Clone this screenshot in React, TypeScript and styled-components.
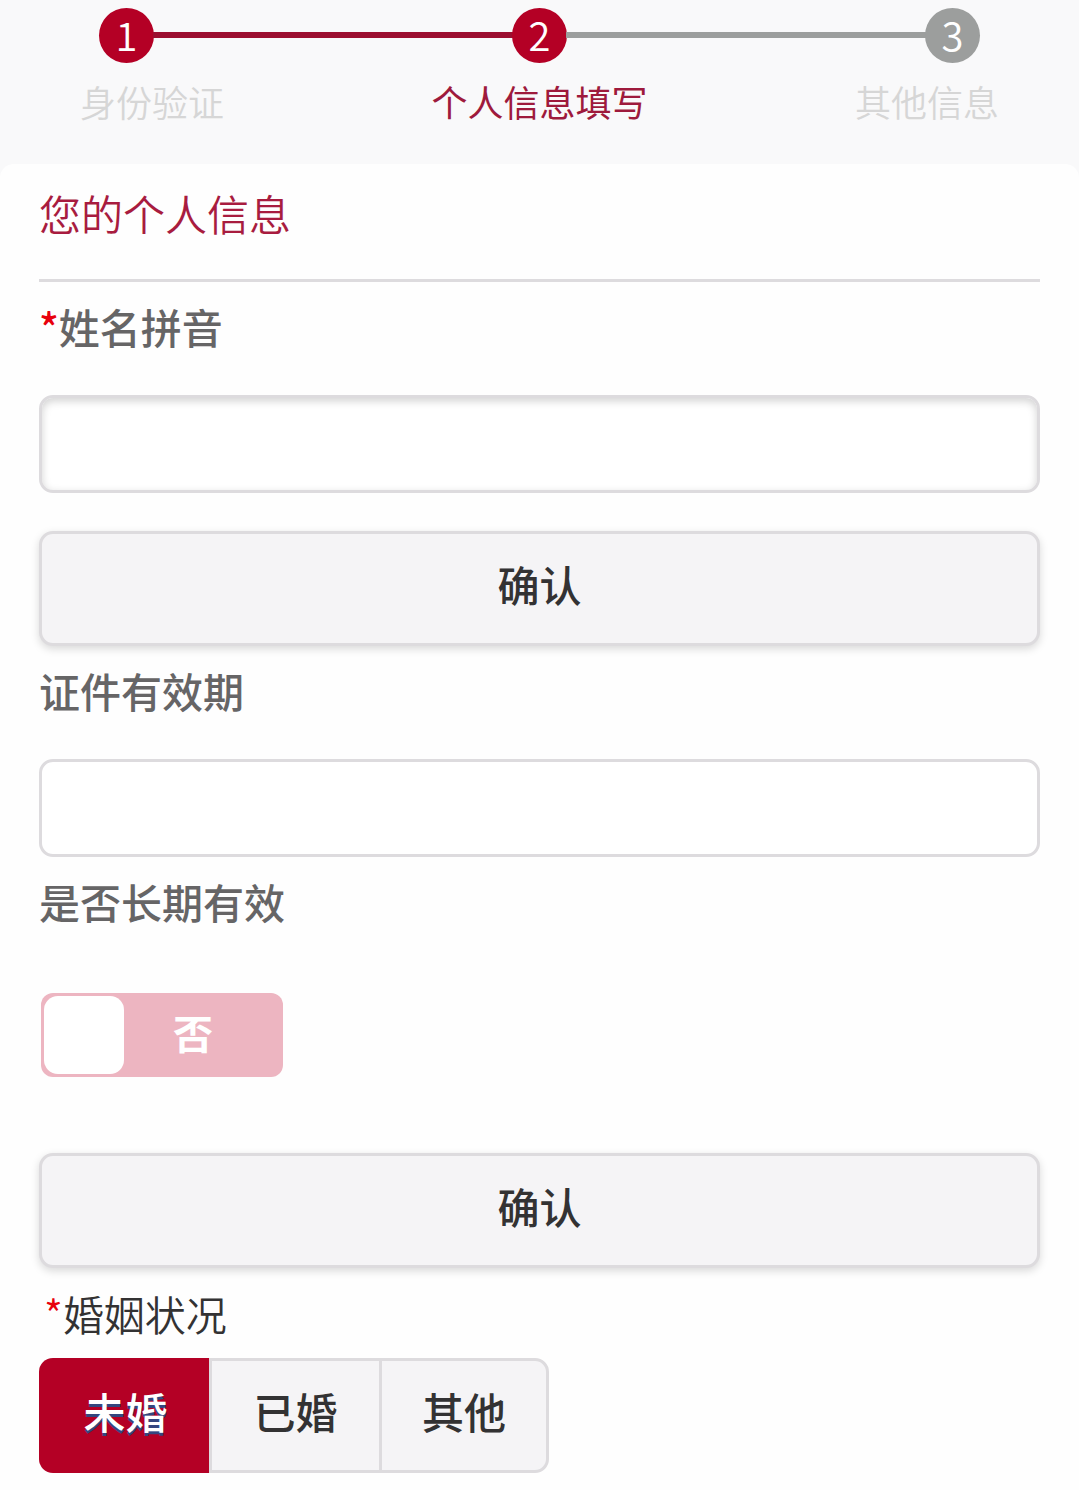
import { useState } from 'react'
import styled, { createGlobalStyle } from 'styled-components'

const colors = {
  brand: '#b40025',
  brandDark: '#9c0f30',
  grey: '#9c9e9d',
  line: '#dddbde',
  surface: '#f5f4f6',
  text: '#333233',
  label: '#666566',
}

const GlobalStyle = createGlobalStyle`
  *, *::before, *::after {
    box-sizing: border-box;
  }

  body {
    margin: 0;
    background-color: #f9f9fa;
    color: ${colors.text};
    font-family: 'Noto Sans CJK SC', sans-serif;
    font-size: 42px;
  }

  input, button {
    font: inherit;
  }
`

const Header = styled.header`
  padding: 8px 0 33px;
`

const StepTrack = styled.div`
  display: flex;
  align-items: center;
  padding: 0 99px;
`

const StepCircle = styled.span<{ $active?: boolean }>`
  flex: none;
  width: 55px;
  height: 55px;
  border-radius: 50%;
  background-color: ${({ $active }) => ($active ? colors.brand : colors.grey)};
  color: #fff;
  font-size: 40px;
  font-weight: 350;
  line-height: 52px;
  text-align: center;
`

const StepLine = styled.span<{ $active?: boolean }>`
  flex: 1;
  height: 6px;
  margin: 0 -1px 2px;
  background-color: ${({ $active }) => ($active ? colors.brandDark : colors.grey)};
`

const StepLabels = styled.div`
  display: flex;
  justify-content: space-between;
  margin-top: 8px;
  padding: 0 80px;
  font-size: 36px;
  line-height: 60px;
`

const StepLabel = styled.span<{ $current?: boolean }>`
  color: ${({ $current }) => ($current ? '#9e1a3c' : '#d6d6d6')};
  font-weight: ${({ $current }) => ($current ? 400 : 350)};
`

const Main = styled.main`
  padding: 19px 39px 17px;
  border-radius: 14px 14px 0 0;
  background-color: #fefefe;
`

const Title = styled.h1`
  margin: 0;
  padding-bottom: 36px;
  border-bottom: 3px solid ${colors.line};
  color: #a81c3f;
  font-size: 42px;
  font-weight: 350;
  line-height: 60px;
`

const FieldLabel = styled.label`
  display: block;
  margin: 14px 0 39px;
  color: ${colors.label};
  font-size: 41px;
  font-weight: 500;
  line-height: 60px;
`

const Required = styled.span`
  color: #e8000c;
`

const TextInput = styled.input<{ $inset?: boolean }>`
  display: block;
  width: 100%;
  height: 98px;
  padding: 0 24px;
  border: 3px solid ${colors.line};
  border-radius: 14px;
  background-color: #fff;
  box-shadow: ${({ $inset }) => ($inset ? 'inset 0 3px 8px rgba(0, 0, 0, 0.18)' : 'none')};
  color: ${colors.text};
  outline: none;
`

const ConfirmButton = styled.button<{ $gap: number }>`
  display: block;
  width: 100%;
  height: 115px;
  margin-top: ${({ $gap }) => $gap}px;
  padding: 0 0 10px;
  border: 3px solid ${colors.line};
  border-radius: 14px;
  background-color: ${colors.surface};
  box-shadow: 0 3px 8px rgba(0, 0, 0, 0.15);
  color: ${colors.text};
  font-weight: 500;
  line-height: 60px;
`

const HiddenInput = styled.input`
  position: absolute;
  width: 1px;
  height: 1px;
  margin: 0;
  opacity: 0;
`

const Switch = styled.label<{ $on: boolean }>`
  position: relative;
  display: flex;
  flex-direction: ${({ $on }) => ($on ? 'row-reverse' : 'row')};
  width: 242px;
  height: 84px;
  margin: 62px 2px 0;
  padding: 3px;
  border-radius: 12px;
  background-color: #edb5c1;
  color: #fff;
  font-size: 40px;
  font-weight: 700;
  line-height: 72px;
  cursor: pointer;
`

const Knob = styled.span`
  width: 80px;
  height: 78px;
  border-radius: 14px;
  background-color: #fff;
`

const SwitchText = styled.span`
  flex: 1;
  padding-right: 18px;
  text-align: center;
`

const Fieldset = styled.fieldset`
  min-width: 0;
  margin: 15px 0 0;
  padding: 0;
  border: 0;
`

const Legend = styled.legend`
  margin-bottom: 15px;
  padding: 0 5px;
  font-size: 41px;
  font-weight: 350;
  line-height: 60px;
`

const Segments = styled.div`
  display: inline-flex;
  vertical-align: top;
`

const Segment = styled.label<{ $selected: boolean }>`
  position: relative;
  width: 170px;
  height: 115px;
  border: 3px solid ${({ $selected }) => ($selected ? colors.brand : colors.line)};
  border-right-width: 0;
  background-color: ${({ $selected }) => ($selected ? colors.brand : colors.surface)};
  color: ${({ $selected }) => ($selected ? '#fff' : colors.text)};
  font-weight: 500;
  line-height: 100px;
  text-align: center;
  text-shadow: ${({ $selected }) => ($selected ? '0 3px 0 #34467f' : 'none')};
  cursor: pointer;

  &:first-child {
    border-radius: 14px 0 0 14px;
  }

  &:last-child {
    border-right-width: 3px;
    border-radius: 0 14px 14px 0;
  }
`

const maritalOptions = ['未婚', '已婚', '其他']

const App = () => {
  const [longTerm, setLongTerm] = useState(false)
  const [marital, setMarital] = useState('未婚')

  return (
    <>
      <GlobalStyle />
      <Header>
        <StepTrack>
          <StepCircle $active>1</StepCircle>
          <StepLine $active />
          <StepCircle $active>2</StepCircle>
          <StepLine />
          <StepCircle>3</StepCircle>
        </StepTrack>
        <StepLabels>
          <StepLabel>身份验证</StepLabel>
          <StepLabel $current>个人信息填写</StepLabel>
          <StepLabel>其他信息</StepLabel>
        </StepLabels>
      </Header>
      <Main>
        <Title>您的个人信息</Title>
        <FieldLabel htmlFor='pinyin'><Required>*</Required>姓名拼音</FieldLabel>
        <TextInput id='pinyin' type='text' $inset />
        <ConfirmButton type='button' $gap={38}>确认</ConfirmButton>
        <FieldLabel htmlFor='expiry'>证件有效期</FieldLabel>
        <TextInput id='expiry' type='text' />
        <FieldLabel htmlFor='long-term'>是否长期有效</FieldLabel>
        <Switch $on={longTerm}>
          <HiddenInput
            id='long-term'
            type='checkbox'
            checked={longTerm}
            onChange={(e) => setLongTerm(e.target.checked)}
          />
          <Knob />
          <SwitchText>{longTerm ? '是' : '否'}</SwitchText>
        </Switch>
        <ConfirmButton type='button' $gap={76}>确认</ConfirmButton>
        <Fieldset>
          <Legend><Required>*</Required>婚姻状况</Legend>
          <Segments>
            {maritalOptions.map((option) => (
              <Segment key={option} $selected={marital === option}>
                <HiddenInput
                  type='radio'
                  name='marital'
                  checked={marital === option}
                  onChange={() => setMarital(option)}
                />
                {option}
              </Segment>
            ))}
          </Segments>
        </Fieldset>
      </Main>
    </>
  )
}

export default App
